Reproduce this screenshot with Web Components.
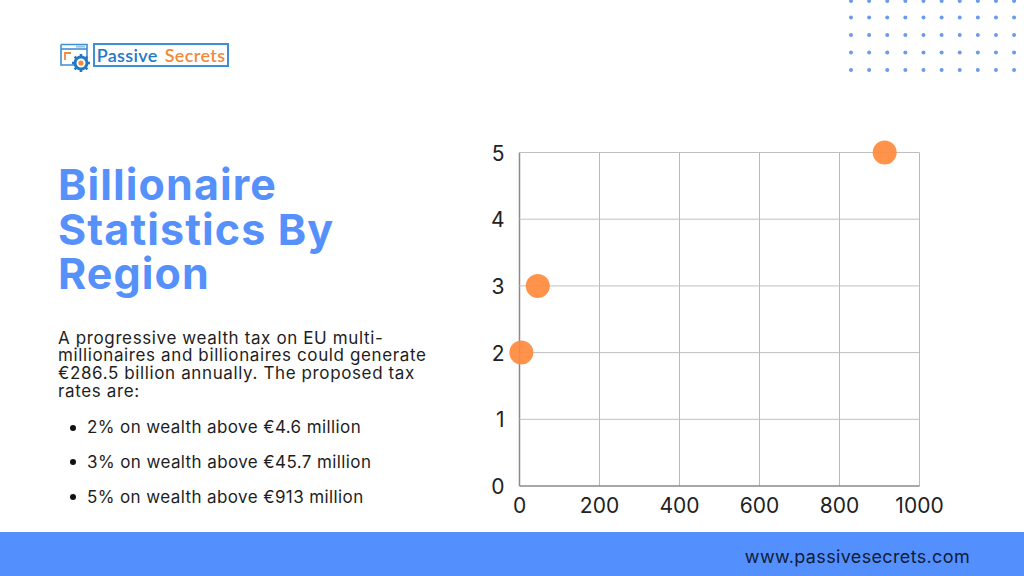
<!DOCTYPE html>
<html lang="en"><head><meta charset="utf-8"><title>Billionaire Statistics By Region</title>
<style>html,body{margin:0;padding:0;background:#fff}</style></head>
<body>
<stat-slide>
  <brand-logo slot="logo"></brand-logo>
  <h1 slot="title">Billionaire Statistics By Region</h1>
  <rate-text slot="text">
    A progressive wealth tax on EU multi-<br>millionaires and billionaires could generate<br>€286.5 billion annually. The proposed tax<br>rates are:
    <rate-item slot="items">2% on wealth above €4.6 million</rate-item>
    <rate-item slot="items">3% on wealth above €45.7 million</rate-item>
    <rate-item slot="items">5% on wealth above €913 million</rate-item>
  </rate-text>
  <scatter-chart slot="chart"></scatter-chart>
  <span slot="url">www.passivesecrets.com</span>
</stat-slide>
<script>
const FONT = '"Inter","Open Sans","Liberation Sans",sans-serif';
function def(name, html){
  customElements.define(name, class extends HTMLElement{
    constructor(){super();this.attachShadow({mode:'open'}).innerHTML=html;}
  });
}
let dots='';
for(let r=0;r<5;r++)for(let c=0;c<10;c++)dots+=`<circle cx="${11+c*18.12}" cy="${[1,17.5,35,52.5,70][r]}" r="2"/>`;
def('stat-slide',`<style>
:host{display:flex;flex-direction:column;width:1024px;height:576px;position:relative;overflow:hidden;background:#fff;color:#1c1c1c;font-family:${FONT}}
.top{height:117px;padding:42px 0 0 59px;box-sizing:border-box;flex:none}
.main{flex:1;display:flex;min-height:0}
.left{width:440px;padding:45px 0 0 58px;box-sizing:border-box;flex:none}
.right{flex:1;padding:0 0 0 40px;box-sizing:border-box}
::slotted(h1){margin:0 0 34px;width:340px;font:700 43px/44.5px ${FONT};color:#5590fb;letter-spacing:1.1px}
.foot{height:44px;flex:none;background:#5490fd;display:flex;align-items:center;justify-content:flex-end;padding:5px 54px 0 0;box-sizing:border-box;color:#0f1c38;font-size:18px;letter-spacing:.35px}
.dots{position:absolute;left:840px;top:0;width:184px;height:80px;fill:#6c9aea}
</style>
<svg class="dots" viewBox="0 0 184 80" aria-hidden="true">${dots}</svg>
<div class="top"><slot name="logo"></slot></div>
<div class="main"><div class="left"><slot name="title"></slot><slot name="text"></slot></div><div class="right"><slot name="chart"></slot></div></div>
<div class="foot"><slot name="url"></slot></div>`);
def('brand-logo',`<style>
:host{display:flex;align-items:flex-start;gap:2px}
svg{flex:none;display:block}
.box{margin-top:1px;width:136px;height:24px;box-sizing:border-box;border:2px solid #3f8fd6;display:flex;align-items:center;justify-content:center;gap:7px;font:600 18px/1 "Lato","Open Sans",sans-serif;letter-spacing:.35px;color:#2379c4;white-space:nowrap}
.o{color:#f08a3c}
</style>
<svg width="32" height="30" viewBox="0 0 32 30" aria-hidden="true">
<path d="M2 2.5H28V21" fill="none" stroke="#3f8fd6" stroke-width="1.6"/>
<path d="M2 2.5V23H16" fill="none" stroke="#3f8fd6" stroke-width="1.6"/>
<path d="M2 7H28" stroke="#3f8fd6" stroke-width="1.6"/>
<path d="M17 4.6H26" stroke="#9cc3e6" stroke-width="2"/>
<path d="M6 18V11H12" fill="none" stroke="#f08a3c" stroke-width="1.8"/>
<g transform="translate(22 21)"><circle r="6" fill="none" stroke="#2379c4" stroke-width="3"/>
<g stroke="#2379c4" stroke-width="2.6"><path d="M0-9V-6.5M0 6.5V9M-9 0H-6.5M6.5 0H9M-6.4-6.4-4.6-4.6M4.6 4.6 6.4 6.4M-6.4 6.4-4.6 4.6M4.6-4.6 6.4-6.4"/></g>
<circle r="2.6" fill="#f08a3c"/></g>
</svg>
<div class="box"><span>Passive</span><span class="o">Secrets</span></div>`);
def('rate-text',`<style>
:host{display:block;width:385px;font-size:17px;line-height:17.7px;color:#1e1e1e;letter-spacing:.62px}
.items{display:flex;flex-direction:column;gap:13.6px;margin-top:16.5px}
</style><div><slot></slot></div><div class="items"><slot name="items"></slot></div>`);
def('rate-item',`<style>
:host{display:flex;align-items:center;height:21.4px;padding-left:12px;gap:11px;font-size:17px;letter-spacing:.4px}
i{width:6px;height:6px;border-radius:50%;background:#111;flex:none}
</style><i></i><span><slot></slot></span>`);
const xs=[0,200,400,600,800,1000],ys=[0,1,2,3,4,5];
const X=v=>39.5+v*.4, Y=v=>369-v*66.7;
let g='';
xs.forEach(v=>{g+=`<line x1="${X(v)}" x2="${X(v)}" y1="${Y(5)}" y2="${Y(0)}" stroke="${v?'#b9b9b9':'#8a8a8a'}" stroke-width="${v?1:1.5}"/>`;
 g+=`<text x="${X(v)}" y="${Y(0)+27}" text-anchor="middle">${v}</text>`;});
ys.forEach(v=>{g+=`<line x1="${X(0)}" x2="${X(1000)}" y1="${Y(v)}" y2="${Y(v)}" stroke="${v?'#c0c0c0':'#8a8a8a'}" stroke-width="${v?1:1.5}"/>`;
 g+=`<text x="${X(0)-15}" y="${Y(v)+8}" text-anchor="end">${v}</text>`;});
[[4.6,2],[45.7,3],[913,5]].forEach(p=>{g+=`<circle cx="${X(p[0])}" cy="${Y(p[1])}" r="12" fill="#ff8a3d" fill-opacity=".92"/>`;});
def('scatter-chart',`<style>
:host{display:block}
svg{display:block;overflow:visible}
text{font-size:21px;fill:#222;font-family:${FONT}}
</style><svg width="480" height="400" viewBox="0 0 480 400" role="img">${g}</svg>`);
</script>
</body></html>
